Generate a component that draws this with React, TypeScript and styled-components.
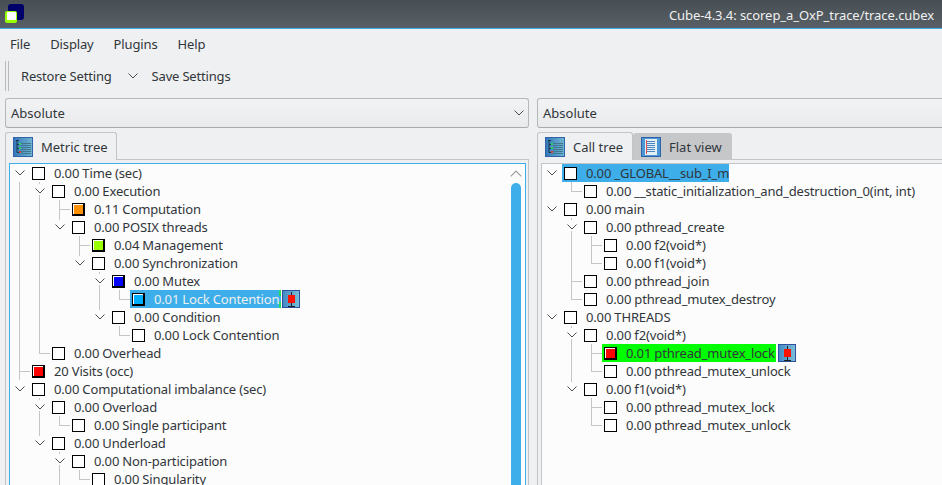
import React from "react";
import styled, { createGlobalStyle, css } from "styled-components";

const GlobalStyle = createGlobalStyle`
  html, body {
    margin: 0;
    padding: 0;
    overflow: hidden;
    background: #eff0f1;
  }
  * {
    box-sizing: border-box;
  }
`;

type Guide = "none" | "line" | "elbow" | "tee" | "open" | "openLine" | "openElbow";
type Mark = "focused" | "selected" | "found";

interface TreeRow {
  guides: Guide[];
  color?: string;
  label: string;
  mark?: Mark;
  glyph?: boolean;
}

const n: Guide = "none";
const l: Guide = "line";
const e: Guide = "elbow";
const t: Guide = "tee";
const o: Guide = "open";
const c: Guide = "openLine";
const d: Guide = "openElbow";

const metricRows: TreeRow[] = [
  { guides: [o], label: "0.00 Time (sec)" },
  { guides: [l, c], label: "0.00 Execution" },
  { guides: [l, l, t], color: "#ff9000", label: "0.11 Computation" },
  { guides: [l, l, d], label: "0.00 POSIX threads" },
  { guides: [l, l, n, t], color: "#99ff00", label: "0.04 Management" },
  { guides: [l, l, n, d], label: "0.00 Synchronization" },
  { guides: [l, l, n, n, c], color: "#0000ff", label: "0.00 Mutex" },
  { guides: [l, l, n, n, l, e], color: "#00b0ff", label: "0.01 Lock Contention", mark: "focused", glyph: true },
  { guides: [l, l, n, n, d], label: "0.00 Condition" },
  { guides: [l, l, n, n, n, e], label: "0.00 Lock Contention" },
  { guides: [l, e], label: "0.00 Overhead" },
  { guides: [t], color: "#ff0000", label: "20 Visits (occ)" },
  { guides: [o], label: "0.00 Computational imbalance (sec)" },
  { guides: [n, c], label: "0.00 Overload" },
  { guides: [n, l, e], label: "0.00 Single participant" },
  { guides: [n, d], label: "0.00 Underload" },
  { guides: [n, n, c], label: "0.00 Non-participation" },
  { guides: [n, n, l, e], label: "0.00 Singularity" },
];

const callRows: TreeRow[] = [
  { guides: [o], label: "0.00 _GLOBAL__sub_I_m", mark: "selected" },
  { guides: [n, e], label: "0.00 __static_initialization_and_destruction_0(int, int)" },
  { guides: [o], label: "0.00 main" },
  { guides: [n, c], label: "0.00 pthread_create" },
  { guides: [n, l, t], label: "0.00 f2(void*)" },
  { guides: [n, l, e], label: "0.00 f1(void*)" },
  { guides: [n, t], label: "0.00 pthread_join" },
  { guides: [n, e], label: "0.00 pthread_mutex_destroy" },
  { guides: [o], label: "0.00 THREADS" },
  { guides: [n, c], label: "0.00 f2(void*)" },
  { guides: [n, l, t], color: "#ff0000", label: "0.01 pthread_mutex_lock", mark: "found", glyph: true },
  { guides: [n, l, e], label: "0.00 pthread_mutex_unlock" },
  { guides: [n, d], label: "0.00 f1(void*)" },
  { guides: [n, n, t], label: "0.00 pthread_mutex_lock" },
  { guides: [n, n, e], label: "0.00 pthread_mutex_unlock" },
];

const Chevron: React.FC<{ size?: number; up?: boolean; color?: string }> = ({ size = 10, up, color = "#4d4d4d" }) => (
  <svg width={size} height={Math.round(size * 0.6)} viewBox="0 0 10 6">
    <path d={up ? "M0.5 5.5 L5 1 L9.5 5.5" : "M0.5 0.5 L5 5 L9.5 0.5"} fill="none" stroke={color} strokeWidth="1" />
  </svg>
);

const TreeIcon: React.FC = () => (
  <svg width="20" height="20" viewBox="0 0 20 20">
    <defs>
      <linearGradient id="treeFill" x1="0" x2="1" y1="0" y2="0">
        <stop offset="0" stopColor="#3576b8" />
        <stop offset="1" stopColor="#6fb6d2" />
      </linearGradient>
    </defs>
    <rect x="0.5" y="0.5" width="19" height="19" fill="url(#treeFill)" stroke="#2f62a8" />
    <path d="M3 3.5H6M4 3.5V15.5M4 7.5H7M4 11.5H7M4 15.5H7" fill="none" stroke="#16364f" />
    <path d="M8 6.5H18M8 8.5H18M8 10.5H18M8 12.5H18M8 14.5H18M8 16.5H18" stroke="#41788f" />
    <rect x="6" y="6" width="2" height="2" fill="#30d060" />
    <rect x="6" y="10" width="2" height="2" fill="#30d060" />
    <rect x="6" y="14" width="2" height="2" fill="#d04040" />
  </svg>
);

const ListIcon: React.FC = () => (
  <svg width="20" height="20" viewBox="0 0 20 20">
    <rect x="0.5" y="0.5" width="19" height="19" fill="#4b97d4" stroke="#2f62a8" />
    <rect x="4" y="2" width="12" height="16" fill="#e6eef6" />
    <path d="M6 4.5H14M6 6.5H14M6 8.5H14M6 10.5H14M6 12.5H14M6 14.5H14" stroke="#4a86c0" />
    <path d="M5.5 3V17" stroke="#e05050" />
  </svg>
);

const LogoIcon: React.FC = () => (
  <svg width="20" height="20" viewBox="0 0 20 20">
    <rect x="3" y="0" width="16" height="16" rx="3" fill="#00006a" />
    <rect x="0" y="7" width="12" height="12" rx="2" fill="#99ff00" />
    <rect x="2" y="8" width="9" height="8" rx="1" fill="#ffffff" />
  </svg>
);

const CandleIcon: React.FC<{ id: string }> = ({ id }) => (
  <svg width="18" height="18" viewBox="0 0 18 18">
    <defs>
      <linearGradient id={id} x1="0" x2="1" y1="0" y2="0">
        <stop offset="0" stopColor="#4088c4" />
        <stop offset="1" stopColor="#7cc0d8" />
      </linearGradient>
    </defs>
    <rect x="0.5" y="0.5" width="17" height="17" fill={`url(#${id})`} stroke="#2f4f9f" />
    <path d="M9.5 2V16" stroke="#202020" />
    <path d="M6 16.5H13" stroke="#202020" />
    <rect x="6" y="5" width="7" height="8" fill="#ff1000" />
  </svg>
);

const Tree: React.FC<{ rows: TreeRow[] }> = ({ rows }) => (
  <TreeBody>
    {rows.map((row) => (
      <Row key={row.label + row.guides.join()}>
        {row.guides.map((guide, i) => (
          <GuideCell key={i} $guide={guide}>
            {(guide === "open" || guide === "openLine" || guide === "openElbow") && <Chevron />}
          </GuideCell>
        ))}
        <Item $mark={row.mark}>
          <Swatch $color={row.color} />
          <Label $mark={row.mark}>{row.label}</Label>
        </Item>
        {row.glyph && (
          <Glyph>
            <CandleIcon id={`candle-${row.label.replace(/\W/g, "")}`} />
          </Glyph>
        )}
      </Row>
    ))}
  </TreeBody>
);

export default function App() {
  return (
    <Window>
      <GlobalStyle />
      <TitleBar>
        <Logo>
          <LogoIcon />
        </Logo>
        <TitleText>Cube-4.3.4: scorep_a_OxP_trace/trace.cubex</TitleText>
      </TitleBar>
      <MenuBar>
        <MenuItem>File</MenuItem>
        <MenuItem>Display</MenuItem>
        <MenuItem>Plugins</MenuItem>
        <MenuItem>Help</MenuItem>
      </MenuBar>
      <ToolBar>
        <Handle />
        <ToolText>Restore Setting</ToolText>
        <ToolChevron>
          <Chevron />
        </ToolChevron>
        <ToolText>Save Settings</ToolText>
      </ToolBar>
      <Panels>
        <LeftPanel>
          <Combo>
            Absolute
            <Chevron />
          </Combo>
          <Tabs>
            <Tab $active $width={112}>
              <TreeIcon />
              Metric tree
            </Tab>
          </Tabs>
          <TabFrame>
            <TreePane $focused>
              <Tree rows={metricRows} />
              <ScrollBar>
                <Chevron size={12} up color="#9a9da0" />
                <ScrollThumb />
              </ScrollBar>
            </TreePane>
          </TabFrame>
        </LeftPanel>
        <RightPanel>
          <Combo>Absolute</Combo>
          <Tabs>
            <Tab $active $width={96}>
              <TreeIcon />
              Call tree
            </Tab>
            <Tab $width={99}>
              <ListIcon />
              Flat view
            </Tab>
          </Tabs>
          <TabFrame>
            <TreePane>
              <Tree rows={callRows} />
            </TreePane>
          </TabFrame>
        </RightPanel>
      </Panels>
    </Window>
  );
}

const Window = styled("div")`
  width: 942px;
  height: 485px;
  overflow: hidden;
  display: flex;
  flex-direction: column;
  background: #eff0f1;
  color: #31363b;
  font-family: "Noto Sans", sans-serif;
  font-size: 13px;
  letter-spacing: -0.16px;
`;

const TitleBar = styled("div")`
  flex: none;
  height: 29px;
  display: flex;
  align-items: center;
  justify-content: space-between;
  padding: 1px 8px 0 5px;
  background: linear-gradient(#474e54, #585f65);
  border-bottom: 1px solid #3daee9;
`;

const Logo = styled("div")`
  width: 20px;
  height: 20px;
  display: flex;
  align-self: flex-start;
  margin-top: 3px;
`;

const TitleText = styled("span")`
  color: #eff0f1;
  letter-spacing: -0.07px;
`;

const MenuBar = styled("div")`
  flex: none;
  height: 31px;
  display: flex;
  align-items: center;
  gap: 20px;
  padding: 0 10px 2px;
  letter-spacing: -0.14px;
`;

const MenuItem = styled("span")`
  line-height: 18px;
`;

const ToolBar = styled("div")`
  flex: none;
  height: 34px;
  display: flex;
  align-items: center;
  padding-left: 5px;
  padding-bottom: 2px;
`;

const Handle = styled("div")`
  width: 4px;
  height: 30px;
  margin-right: 12px;
  border-left: 1px solid #b8babc;
  border-right: 1px solid #b8babc;
`;

const ToolText = styled("span")`
  line-height: 18px;
  letter-spacing: -0.18px;
`;

const ToolChevron = styled("span")`
  display: flex;
  margin: 0 14px 0 16px;
`;

const Panels = styled("div")`
  flex: 1;
  min-height: 0;
  display: flex;
  gap: 8px;
  padding: 4px 0 0 5px;
`;

const LeftPanel = styled("div")`
  flex: none;
  width: 524px;
  display: flex;
  flex-direction: column;
`;

const RightPanel = styled(LeftPanel)`
  width: 440px;
`;

const Combo = styled("div")`
  flex: none;
  height: 30px;
  display: flex;
  align-items: center;
  justify-content: space-between;
  padding: 0 4px 0 5px;
  border: 1px solid #b5b7b9;
  border-bottom-color: #a8aaac;
  border-radius: 3px;
  background: linear-gradient(#f2f3f4, #e9eaeb);
  letter-spacing: 0;
`;

const Tabs = styled("div")`
  flex: none;
  height: 28px;
  margin-top: 4px;
  margin-bottom: -1px;
  display: flex;
  position: relative;
  z-index: 1;
`;

const Tab = styled("div")<{ $active?: boolean; $width: number }>`
  width: ${({ $width }) => $width}px;
  display: flex;
  align-items: center;
  gap: 8px;
  padding-left: 7px;
  border: 1px solid #c2c4c6;
  border-bottom: none;
  border-radius: 3px 3px 0 0;
  letter-spacing: 0;
  ${({ $active }) =>
    $active
      ? css`
          background: #eff0f1;
        `
      : css`
          height: 27px;
          align-self: flex-end;
          background: #c6c7c9;
          border-color: #c6c7c9;
        `}
`;

const TabFrame = styled("div")`
  flex: 1;
  min-height: 0;
  padding: 3px 2px 0 3px;
  border: 1px solid #c2c4c6;
  border-bottom: none;
`;

const TreePane = styled("div")<{ $focused?: boolean }>`
  height: 100%;
  display: flex;
  background: #fcfcfc;
  border: 1px solid ${({ $focused }) => ($focused ? "#3daee9" : "#c2c4c6")};
  border-bottom: none;
`;

const TreeBody = styled("div")`
  flex: 1;
  min-width: 0;
  overflow: hidden;
`;

const Row = styled("div")`
  height: 18px;
  display: flex;
  align-items: stretch;
  white-space: nowrap;
`;

const lineColor = "#c4c5c6";

const GuideCell = styled("div")<{ $guide: Guide }>`
  flex: none;
  width: 20px;
  display: flex;
  align-items: center;
  justify-content: center;
  background-repeat: no-repeat;
  ${({ $guide }) => {
    const vertical = `linear-gradient(${lineColor}, ${lineColor})`;
    switch ($guide) {
      case "line":
        return css`
          background-image: ${vertical};
          background-size: 1px 100%;
          background-position: 9px 0;
        `;
      case "tee":
        return css`
          background-image: ${vertical}, ${vertical};
          background-size: 1px 100%, 11px 1px;
          background-position: 9px 0, 9px 9px;
        `;
      case "elbow":
        return css`
          background-image: ${vertical}, ${vertical};
          background-size: 1px 10px, 11px 1px;
          background-position: 9px 0, 9px 9px;
        `;
      case "openLine":
        return css`
          background-image: ${vertical}, ${vertical};
          background-size: 1px 2px, 1px 5px;
          background-position: 9px 0, 9px 13px;
        `;
      case "openElbow":
        return css`
          background-image: ${vertical};
          background-size: 1px 2px;
          background-position: 9px 0;
        `;
      default:
        return "";
    }
  }}
`;

const Item = styled("div")<{ $mark?: Mark }>`
  display: flex;
  align-items: center;
  padding-left: 2px;
  ${({ $mark }) =>
    ($mark === "selected" || $mark === "focused") &&
    css`
      background: #3daee9;
    `}
  ${({ $mark }) =>
    $mark === "focused" &&
    css`
      border-right: 2px dashed #20e060;
    `}
  ${({ $mark }) =>
    $mark === "found" &&
    css`
      background: #00ff00;
      padding-right: 1px;
      margin-right: 1px;
    `}
`;

const Swatch = styled("span")<{ $color?: string }>`
  flex: none;
  width: 13px;
  height: 13px;
  border: 1px solid #000;
  background: ${({ $color }) => $color ?? "#fff"};
  ${({ $color }) =>
    $color &&
    css`
      border-right-width: 2px;
      border-bottom-width: 2px;
      box-shadow: inset 1px 1px 0 #fff;
    `}
`;

const Label = styled("span")<{ $mark?: Mark }>`
  margin-left: 9px;
  line-height: 18px;
  color: ${({ $mark }) => ($mark === "focused" ? "#eff0f1" : "#31363b")};
`;

const Glyph = styled("span")`
  flex: none;
  display: flex;
  margin-left: 1px;
`;

const ScrollBar = styled("div")`
  flex: none;
  width: 16px;
  display: flex;
  flex-direction: column;
  align-items: center;
  padding-top: 6px;
  margin-right: 1px;
`;

const ScrollThumb = styled("div")`
  width: 10px;
  flex: 1;
  margin-top: 6px;
  border-radius: 5px 5px 0 0;
  background: #3daee9;
`;
